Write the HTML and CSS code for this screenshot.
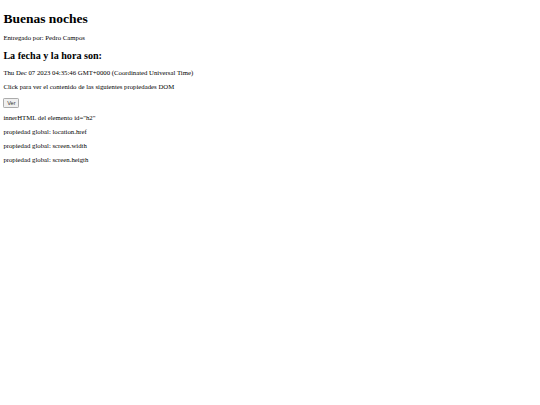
FILE: index.html
```html
<!DOCTYPE html>
<html lang="es">
<head>
<meta charset="utf-8">
<title>DOM</title>
<link rel="stylesheet" href="styles.css">
</head>
<body class="page">
<h1 class="title">Buenas noches</h1>
<p class="text">Entregado por: Pedro Campos</p>
<h2 class="subtitle">La fecha y la hora son:</h2>
<p class="text">Thu Dec 07 2023 04:35:46 GMT+0000 (Coordinated Universal Time)</p>
<p class="text">Click para ver el contenido de las siguientes propiedades DOM</p>
<button class="btn" type="button">Ver</button>
<p class="text">innerHTML del elemento id="h2"</p>
<p class="text">propiedad global: location.href</p>
<p class="text">propiedad global: screen.width</p>
<p class="text">propiedad global: screen.heigth</p>
</body>
</html>
```

FILE: styles.css
```css
html {
  background: #fff;
}
.page {
  margin: 3.375px;
  font-family: "Liberation Serif", "Times New Roman", serif;
  font-size: 6.75px;
  color: #000;
}
.title {
  font-size: 13.5px;
  font-weight: bold;
  margin: 8px 0 7px;
}
.subtitle {
  font-size: 10.125px;
  font-weight: bold;
  margin: 8.4px 0;
}
.text {
  margin: 6.75px 0;
  line-height: 7.1px;
}
.btn {
  font-family: "Liberation Sans", Arial, sans-serif;
  font-size: 5.6px;
  padding: 0.8px 2.8px;
  margin: 1px 0 0;
  background: #f0f0f0;
  border: 0.85px solid #ababab;
  border-radius: 1.2px;
  color: #333;
  line-height: normal;
}
```
